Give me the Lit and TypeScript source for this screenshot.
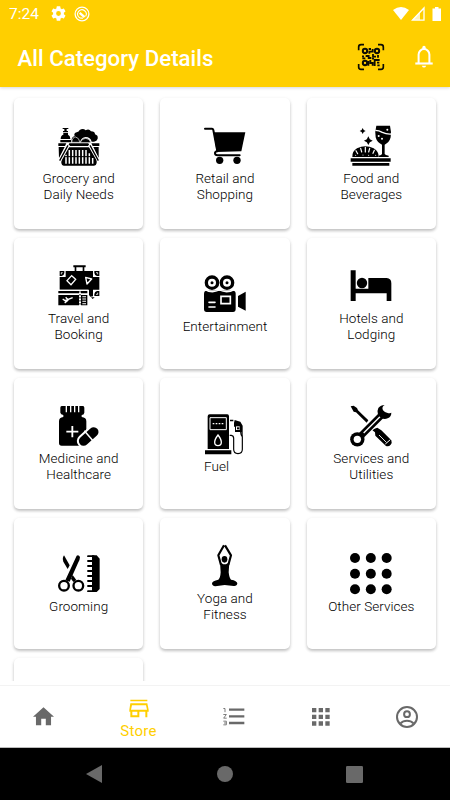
import { LitElement, html, css, svg } from "lit";
import { customElement, property } from "lit/decorators.js";
import { classMap } from "lit/directives/class-map.js";

interface Category {
  lines: string[];
  box: string;
  art: unknown;
  shift?: boolean;
}

const star = (x: number, y: number, r: number) =>
  svg`<path d="M${x} ${y - r}L${x + r * 0.35} ${y - r * 0.35}L${x + r} ${y}L${x + r * 0.35} ${y + r * 0.35}L${x} ${y + r}L${x - r * 0.35} ${y + r * 0.35}L${x - r} ${y}L${x - r * 0.35} ${y - r * 0.35}Z"/>`;

const reel = (x: number) => svg`
  <circle cx=${x} cy="143" r="17" fill="none" stroke="#000" stroke-width="10"/>
  <circle cx=${x} cy="143" r="4.5"/>`;

const categories: Category[] = [
  {
    lines: ["Grocery and", "Daily Needs"],
    box: "173 105 126 126",
    art: svg`
      <path d="M187 114H204V117H199V123H203V127H188V123H192V117H187Z"/>
      <path d="M181 147Q181 136 189 134V129H203V134Q210 137 210 147ZM180 150H212V157H180Z"/>
      <path d="M214 157V147Q216 139 223 138Q219 130 229 127Q236 125 238 120Q248 113 256 121Q266 115 272 124Q284 124 284 133Q294 136 292 146Q290 153 281 155H274Q270 141 256 141Q243 142 239 157Z"/>
      <path d="M214 157Q216 141 226 141Q236 143 239 157Z" stroke="#fff" stroke-width="2"/>
      <path d="M239 158Q245 145 256 145Q267 145 272 158Z" stroke="#fff" stroke-width="2"/>
      <path d="M174 160H198L194 168H174ZM207 160H264L268 168H203ZM273 160H297V168H277Z"/>
      <path d="M175 171H193L176 204ZM295 171H279L295 204ZM202 172H269L289 207V219Q288 227 281 227H190Q184 227 183 219V207Z"/>
      <path d="M207 180V221M217 180V221M227 180V221M237 180V221M247 180V221M257 180V221M197 194V221M267 190V221M277 204V221" stroke="#fff" stroke-width="4.5" fill="none"/>
      <path d="M188 200H281" stroke="#000" stroke-width="3" fill="none"/>
      <path d="M205 164L178 213M267 164L295 213" stroke="#fff" stroke-width="9" fill="none"/>
      <path d="M203 166L178 212M269 166L294 212" stroke="#000" stroke-width="4" fill="none"/>`,
  },
  {
    lines: ["Retail and", "Shopping"],
    box: "162 105 126 126",
    art: svg`
      <path d="M165 116H186Q189 116 190 120L202 184Q194 185 195 190Q195 196 203 196H269" fill="none" stroke="#000" stroke-width="6" stroke-linecap="round" stroke-linejoin="round"/>
      <path d="M191 127H286L274 184L200 186Z"/>
      <circle cx="209" cy="211" r="11"/><circle cx="261" cy="211" r="11"/>`,
  },
  {
    lines: ["Food and", "Beverages"],
    box: "151 105 126 126",
    art: svg`
      ${star(189, 123, 9)}${star(206, 152, 13)}
      <path d="M230 107H271Q276 127 273 142Q269 158 255 164V192Q257 196 267 197V201H237V197Q246 196 247 192V164Q232 158 228 142Q225 125 230 107Z"/>
      <path d="M227 121Q238 121 248 127Q260 133 275 132" fill="none" stroke="#fff" stroke-width="4"/>
      <g fill="#fff"><circle cx="263" cy="119" r="3"/><circle cx="237" cy="138" r="3"/><circle cx="247" cy="146" r="3"/></g>
      <path d="M158 201Q157 184 172 175Q197 163 222 175Q238 185 237 201Z"/>
      <path d="M169 182L174 191M183 175L186 186M197 172V186M210 175L207 186M224 181L220 190" fill="none" stroke="#fff" stroke-width="3.6" stroke-linecap="round"/>
      <g fill="#fff"><circle cx="168" cy="196" r="1.6"/><circle cx="190" cy="195" r="1.6"/><circle cx="207" cy="196" r="1.6"/><circle cx="228" cy="196" r="1.6"/></g>
      <path d="M153 205H273V215H153ZM158 219H269V227H158Z"/>`,
  },
  {
    lines: ["Travel and", "Booking"],
    box: "173 90 126 126",
    art: svg`
      <path d="M219 91H256V97H252V109H247V97H228V109H223V97H219Z"/>
      <path d="M196 108H278V126H297V164H278V184L270 185L266 180V164H178V126H196Z"/>
      <path d="M178 108H192V114Q191 122 184 123H178ZM297 108H282V114Q283 122 290 123H297ZM297 183H282V177Q283 169 290 168H297Z"/>
      <path d="M183 118V113H187M287 113H292V118M292 173V178H287" fill="none" stroke="#fff" stroke-width="2.4"/>
      <path d="M214 122L226 133L212 149L200 137Z" fill="none" stroke="#fff" stroke-width="4"/>
      <path d="M256 127L274 132L260 147Z" fill="none" stroke="#fff" stroke-width="4" stroke-linejoin="round"/>
      <path d="M172 164H263V183H264V214H172Z" fill="#fff"/>
      <path d="M174 168H236V175H174ZM242 168H261V175H242ZM174 180H236V211H174ZM242 180H261V211H242Z"/>
      <path d="M246 185H257M246 192H257M246 199H257M246 206H257" stroke="#fff" stroke-width="3.2"/>
      <path d="M239 168V211" stroke="#000" stroke-width="3" stroke-dasharray="5 4"/>
      <path d="M187 192L194 197L217 188M204 195L193 204M203 194L196 187" stroke="#fff" stroke-width="4" fill="none"/>
      <path d="M272 187H283L277 192Z"/>`,
  },
  {
    lines: ["Entertainment"],
    box: "612 114 126 126",
    art: svg`
      ${reel(636)}${reel(681)}
      <path d="M620 167H699Q707 167 707 176V222Q707 231 699 231H620Q612 231 612 222V176Q612 167 620 167Z"/>
      <path d="M615 164Q636 176 658 165Q681 176 703 164" fill="none" stroke="#fff" stroke-width="4"/>
      <path d="M627 202H645M627 216H645" stroke="#fff" stroke-width="5" stroke-linecap="round"/>
      <path d="M663 184H691V206H663Z" fill="none" stroke="#fff" stroke-width="5"/>
      <path d="M714 183L737 170V227L714 215Z"/>`,
  },
  {
    lines: ["Hotels and", "Lodging"],
    box: "376 90 126 126",
    art: svg`
      <path d="M378 106H393V161H431V129H486Q500 130 500 145V198H486V175H393V198H378Z"/>
      <circle cx="412" cy="144" r="15.5"/>`,
  },
  {
    lines: ["Medicine and", "Healthcare"],
    box: "173 90 126 126",
    art: svg`
      <path d="M184 93H248Q252 94 252 98V113Q251 120 244 120V126Q258 127 258 139V205Q257 212 250 212H184Q176 212 176 204V139Q176 127 189 126V120Q181 119 180 113V98Q180 94 184 93Z"/>
      <path d="M198 92V112M211 92V112M223 92V112M235 92V112" stroke="#fff" stroke-width="4"/>
      <path d="M216 153V187M198 170H234" stroke="#fff" stroke-width="5.5"/>
      <path d="M250 198L280 171" stroke="#fff" stroke-width="41" stroke-linecap="round"/>
      <path d="M250 198L280 171" stroke="#000" stroke-width="29" stroke-linecap="round"/>
      <path d="M252 167L281 201" stroke="#fff" stroke-width="4.5"/>`,
  },
  {
    lines: ["Fuel"],
    box: "612 114 126 126",
    shift: true,
    art: svg`
      <path d="M629 118H682Q687 118 687 124V222H623V124Q623 118 629 118ZM615 226H694V238H615Z"/>
      <path d="M630 128H679V164H630Z" fill="none" stroke="#fff" stroke-width="3"/>
      <path d="M638 146H674" stroke="#fff" stroke-width="4" stroke-dasharray="5 4"/>
      <path d="M654 180Q644 193 644 202Q644 212 654 212Q664 212 664 202Q664 193 654 180Z" fill="none" stroke="#fff" stroke-width="4"/>
      <path d="M689 181H694Q701 182 701 190V223Q701 236 714 236Q727 236 727 223V185Q722 179 722 171" fill="none" stroke="#000" stroke-width="3.5"/>
      <path d="M690 134H700V139H690ZM704 135L721 140L728 152V184H724V171H705V155H702V144Z"/>
      <path d="M708 154H719V165H708Z" fill="#fff"/>
      <path d="M711 157H718V163H711Z"/>`,
  },
  {
    lines: ["Services and", "Utilities"],
    box: "376 90 126 126",
    art: svg`
      <path d="M378 94L387 92L397 99L400 106L431 136L426 143L394 112L387 110Z"/>
      <path d="M441 164L458 158L470 166L500 196Q503 204 498 209Q492 216 484 213L452 182L451 172Z"/>
      <path d="M463 180L485 202" stroke="#fff" stroke-width="2.6"/>
      <path d="M482 207L497 194" stroke="#fff" stroke-width="3"/>
      <path d="M411 180L467 123" stroke="#fff" stroke-width="27"/>
      <path d="M410 181L470 121" stroke="#000" stroke-width="20"/>
      <path d="M417 174L466 125" stroke="#fff" stroke-width="4"/>
      <path d="M480 90Q470 96 475 106Q485 119 500 113Q500 126 489 130Q479 134 470 129L460 119Q456 109 461 99Q468 90 480 90Z"/>
      <circle cx="398" cy="193" r="21.5"/><circle cx="398" cy="193" r="11" fill="#fff"/>`,
  },
  {
    lines: ["Grooming"],
    box: "173 114 126 126",
    art: svg`
      <path d="M191 121L208 151L202 162L189 140Q185 129 191 121Z"/>
      <path d="M229 122Q235 118 239 126Q239 134 233 144L208 200L195 196Z"/>
      <path d="M217 180L228 195L219 201L212 191Z"/>
      <circle cx="191" cy="212" r="14.5" fill="none" stroke="#000" stroke-width="7"/>
      <circle cx="234" cy="212" r="14.5" fill="none" stroke="#000" stroke-width="7"/>
      <path d="M275 121H289L298 131V222L289 231H275Z"/>
      <path d="M263 123.5H280M263 138H280M263 153H280M263 168H280M263 183H280M263 198H280M263 213H280M263 228.5H280" stroke="#000" stroke-width="5.5" stroke-linecap="round"/>`,
  },
  {
    lines: ["Yoga and", "Fitness"],
    box: "612 90 126 126",
    art: svg`
      <ellipse cx="673.5" cy="133" rx="8.5" ry="10"/>
      <path d="M672 91L655 121L663 150M675 91L693 121L685 150" fill="none" stroke="#000" stroke-width="6.5" stroke-linejoin="round"/>
      <path d="M660 142L670 148H678L688 142L686 172Q688 190 693 194Q711 197 712 205Q711 214 701 213L674 210L646 214Q636 213 636 205Q637 198 655 194Q661 190 662 172Z"/>
      <path d="M652 203L674 199L696 203" fill="none" stroke="#000" stroke-width="12" stroke-linejoin="round"/>`,
  },
  {
    lines: ["Other Services"],
    box: "376 114 126 126",
    art: [129, 176, 223].map((y) => [391, 438.5, 486].map((x) => svg`<circle cx=${x} cy=${y} r="15"/>`)),
  },
];

@customElement("category-card")
export class CategoryCard extends LitElement {
  @property({ attribute: false }) item?: Category;

  static styles = css`
    :host {
      display: flex;
      flex-direction: column;
      align-items: center;
      justify-content: center;
      box-sizing: border-box;
      height: 131px;
      border-radius: 5px;
      background: #fff;
      box-shadow: 0 2px 3px rgba(0, 0, 0, 0.2), 0 1px 4px rgba(0, 0, 0, 0.07);
    }
    .icon {
      display: block;
      width: 42px;
      height: 42px;
      overflow: visible;
    }
    .label {
      margin-top: 3px;
      padding-bottom: 1px;
      font-size: 13.5px;
      font-weight: 300;
      line-height: 16px;
      letter-spacing: 0.05px;
      color: #000;
      text-align: center;
      white-space: nowrap;
    }
    .shift {
      margin-right: 17px;
    }
    .line {
      display: block;
    }
  `;

  render() {
    if (!this.item) return html``;
    const { box, art, lines, shift } = this.item;
    return html`
      <svg class="icon" viewBox=${box}>${art}</svg>
      <div class=${classMap({ label: true, shift: !!shift })}>
        ${lines.map((l) => html`<span class="line">${l}</span>`)}
      </div>
    `;
  }
}

@customElement("app-root")
export class AppRoot extends LitElement {
  static styles = css`
    :host {
      display: flex;
      flex-direction: column;
      width: 450px;
      height: 800px;
      overflow: hidden;
      background: #fff;
      font-family: Roboto, "Liberation Sans", sans-serif;
    }
    svg {
      display: block;
      overflow: visible;
      flex: none;
    }
    .top {
      flex: none;
      height: 87px;
      background: #ffcf00;
      color: #fff;
      box-shadow: 0 1px 3px rgba(0, 0, 0, 0.16);
      z-index: 1;
    }
    .status {
      display: flex;
      align-items: center;
      height: 27px;
      padding: 0 8px 0 9px;
      font-size: 15.5px;
    }
    .clock {
      width: 42px;
      line-height: 28px;
    }
    .spacer {
      flex: 1;
    }
    .second {
      margin-left: 8px;
    }
    .signal {
      margin-left: 2px;
    }
    .battery {
      margin-left: 7px;
    }
    .bar {
      display: flex;
      align-items: center;
      height: 60px;
      padding: 0 17px 0 17.5px;
      box-sizing: border-box;
    }
    .title {
      flex: 1;
      margin: 2px 0 0;
      font-size: 22.25px;
      font-weight: 500;
      line-height: 28px;
    }
    .qr {
      margin: -1px 31px 0 0;
    }
    .list {
      flex: none;
      height: 594px;
      overflow: hidden;
      box-sizing: border-box;
      padding: 11px 14px 0;
      display: grid;
      grid-template-columns: repeat(3, 1fr);
      grid-auto-rows: 131px;
      gap: 9px 17px;
      align-content: start;
    }
    .tabs {
      flex: none;
      display: grid;
      grid-template-columns: 86px 105px 86px 87px 86px;
      height: 63px;
      margin-top: 4px;
      box-sizing: border-box;
      border-top: 1px solid #f3f3f3;
      border-bottom: 1px solid #bbb;
      color: #696969;
    }
    .tab {
      display: flex;
      flex-direction: column;
      align-items: center;
      justify-content: center;
      fill: currentColor;
    }
    .active {
      color: #ffcf00;
      justify-content: flex-start;
      padding-top: 13px;
    }
    .name {
      font-size: 15px;
      line-height: 18px;
      margin-top: 3px;
      letter-spacing: 0.25px;
    }
    .system {
      flex: 1;
      background: #000;
      display: flex;
      align-items: center;
      justify-content: space-between;
      padding: 0 87px 0 86px;
      fill: #696969;
    }
    .home {
      margin-left: 2px;
    }
  `;

  render() {
    return html`
      <header class="top">
        <div class="status">
          <span class="clock">7:24</span>
          <svg width="15" height="15" viewBox="2 2 20 20" fill="#fff"><path d="M19.14 12.94c.04-.3.06-.61.06-.94s-.02-.64-.07-.94l2.03-1.58a.49.49 0 0 0 .12-.61l-1.92-3.32a.49.49 0 0 0-.59-.22l-2.39.96a7 7 0 0 0-1.62-.94l-.36-2.54a.48.48 0 0 0-.48-.41h-3.84a.48.48 0 0 0-.47.41l-.36 2.54a7.4 7.4 0 0 0-1.62.94l-2.39-.96a.48.48 0 0 0-.59.22L2.74 8.87a.48.48 0 0 0 .12.61l2.03 1.58c-.05.3-.09.63-.09.94s.02.64.07.94l-2.03 1.58a.49.49 0 0 0-.12.61l1.92 3.32c.12.22.37.29.59.22l2.39-.96c.5.38 1.03.7 1.62.94l.36 2.54c.05.24.24.41.48.41h3.84c.24 0 .44-.17.47-.41l.36-2.54a7 7 0 0 0 1.62-.94l2.39.96c.22.08.47 0 .59-.22l1.92-3.32a.48.48 0 0 0-.12-.61ZM12 15.2a3.2 3.2 0 1 1 0-6.4 3.2 3.2 0 0 1 0 6.4Z"/></svg>
          <svg class="second" width="16" height="16" viewBox="0 0 16 16" fill="none" stroke="#fff">
            <circle cx="8" cy="8" r="6.9" stroke-width="1.3"/>
            <path d="M4.6 10.8A4.3 4.3 0 1 1 11.6 10.4" stroke-width="1.1"/>
            <path d="M5.6 6.8L10.6 11.2" stroke-width="2.4"/>
            <path d="M4.6 10.8Q6.5 12.6 9 12" stroke-width="1.1"/>
          </svg>
          <span class="spacer"></span>
          <svg width="16" height="13" viewBox="0 0 16 13" fill="#fff"><path d="M0 3Q8-3 16 3L8 13Z"/></svg>
          <svg class="signal" width="14" height="14" viewBox="0 0 14 14"><path d="M13 1V13.2H1.5Z" fill="none" stroke="#fff" stroke-width="1.3"/><path d="M9 5V13H1Z" fill="#fff" opacity=".75"/></svg>
          <svg class="battery" width="10" height="14" viewBox="0 0 10 14" fill="#fff"><path d="M3 0H6.5V1.5H9V14H.5V1.5H3Z"/></svg>
        </div>
        <div class="bar">
          <h1 class="title">All Category Details</h1>
          <svg class="qr" width="26" height="26" viewBox="398 130 78 78" fill="none" stroke="#0c0c04">
            <path d="M400 149V139Q400 132 407 132H416M458 132H467Q474 132 474 139V149M474 190V199Q474 206 467 206H458M416 206H407Q400 206 400 199V190" stroke-width="5"/>
            <circle cx="419" cy="151" r="6.5" stroke-width="6"/><circle cx="455" cy="151" r="6.5" stroke-width="6"/><circle cx="419" cy="187" r="6.5" stroke-width="6"/>
            <path d="M430 145H437M442 145V153H432V159M410 167H416M421 166H430V172H438M443 160V168H452M458 163V171M411 173H420M429 181V195M435 178V187H442V195M448 175V196M449 178H463M455 186H462M456 194H463M440 174H446" stroke-width="5.5"/>
          </svg>
          <svg width="18" height="22" viewBox="0 0 18 22" fill="none" stroke="#fff">
            <path d="M3.6 17.5V8.5A5.4 5.4 0 0 1 14.4 8.5V17.5" stroke-width="2"/>
            <path d="M.3 17.5H17.7" stroke-width="2.1"/>
            <path d="M7.3 3V1.5A1.7 1.7 0 0 1 10.7 1.5V3ZM6.8 19.7H11.2Q10.5 21.6 9 21.6Q7.5 21.6 6.8 19.7Z" fill="#fff" stroke="none"/>
          </svg>
        </div>
      </header>
      <main class="list">
        ${categories.map((c) => html`<category-card .item=${c}></category-card>`)}
        <category-card></category-card>
      </main>
      <nav class="tabs">
        <div class="tab"><svg width="21" height="19" viewBox="97 82 64 56"><path d="M129 82L161 111H152V137H136V117H122V137H106V111H97Z"/></svg></div>
        <div class="tab active">
          <svg width="20" height="20" viewBox="386 56 60 60"><path d="M390 58H441V63H390ZM390 69H441L445 88V94H441V111H435V94H417V111H390V94H387V88ZM395 75L392 88H440L437 75ZM396 94V105H411V94Z" fill-rule="evenodd"/></svg>
          <span class="name">Store</span>
        </div>
        <div class="tab"><svg width="22" height="19" viewBox="669 83 66 56">
          <path d="M687 87H733V94H687ZM687 107H733V114H687ZM687 127H733V134H687Z"/>
          <path d="M670 87H675V98M670 105H679L671 116H680M670 125H679V136H670M672 130.5H679" fill="none" stroke="currentColor" stroke-width="2.6"/>
        </svg></div>
        <div class="tab"><svg width="18" height="18" viewBox="935 84 54 54"><path d="M935 84H948V97H935ZM955 84H968V97H955ZM975 84H988V97H975ZM935 104H948V117H935ZM955 104H968V117H955ZM975 104H988V117H975ZM935 124H948V137H935ZM955 124H968V137H955ZM975 124H988V137H975Z"/></svg></div>
        <div class="tab"><svg width="22" height="22" viewBox="0 0 22 22" fill="none" stroke="currentColor" stroke-width="2"><circle cx="11" cy="11" r="10"/><circle cx="11" cy="8.2" r="2.9"/><path d="M4.3 17.5Q7 14.7 11 14.7Q15 14.7 17.7 17.5"/></svg></div>
      </nav>
      <footer class="system">
        <svg width="16" height="18" viewBox="0 0 16 18"><path d="M16 0V18L0 9Z"/></svg>
        <svg class="home" width="16" height="16" viewBox="0 0 16 16"><circle cx="8" cy="8" r="8"/></svg>
        <svg width="17" height="17" viewBox="0 0 17 17"><rect width="17" height="17" rx="1.2"/></svg>
      </footer>
    `;
  }
}
